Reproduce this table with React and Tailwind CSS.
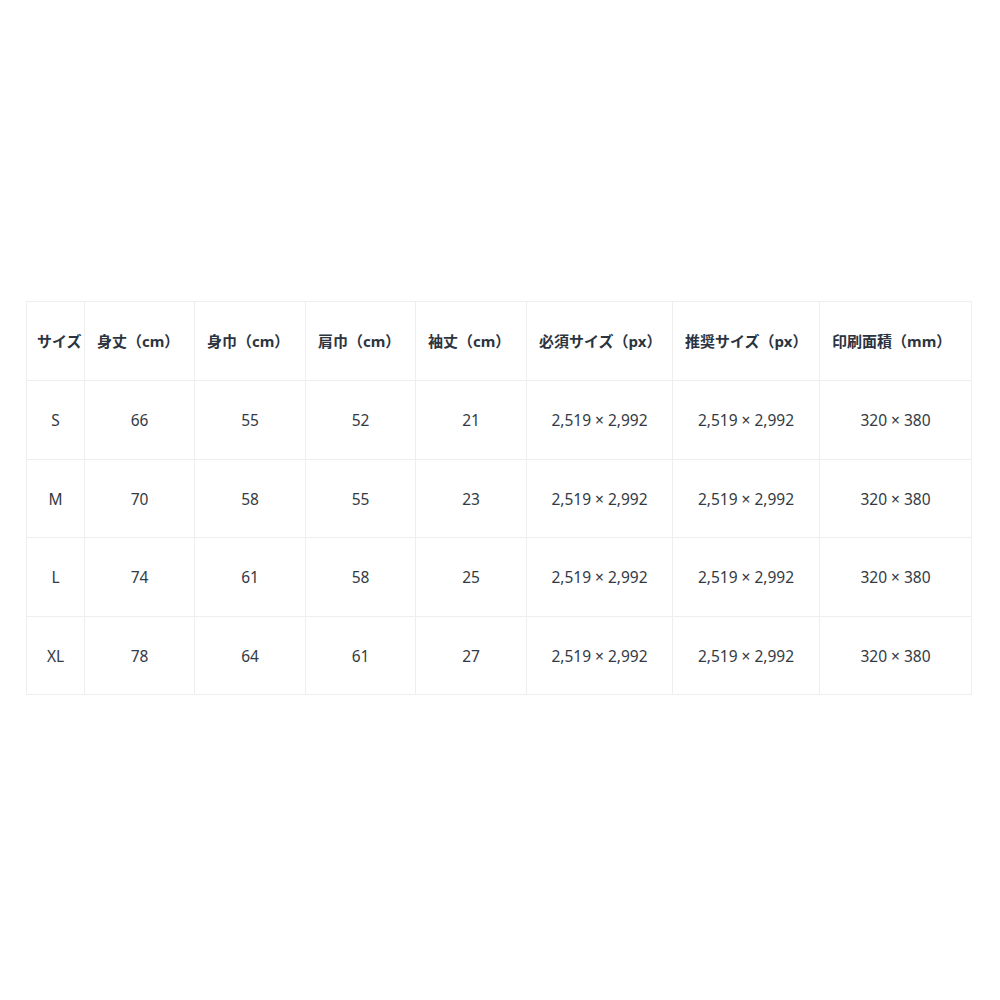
const headers = ['サイズ', '身丈（cm）', '身巾（cm）', '肩巾（cm）', '袖丈（cm）', '必須サイズ（px）', '推奨サイズ（px）', '印刷面積（mm）']
const widths = ['w-[58px]', 'w-[110px]', 'w-[111px]', 'w-[110px]', 'w-[111px]', 'w-[146px]', 'w-[147px]', 'w-[152px]']

const rows = [
  ['S', '66', '55', '52', '21', '2,519 × 2,992', '2,519 × 2,992', '320 × 380'],
  ['M', '70', '58', '55', '23', '2,519 × 2,992', '2,519 × 2,992', '320 × 380'],
  ['L', '74', '61', '58', '25', '2,519 × 2,992', '2,519 × 2,992', '320 × 380'],
  ['XL', '78', '64', '61', '27', '2,519 × 2,992', '2,519 × 2,992', '320 × 380'],
]

export default function App() {
  return (
    <div className="w-[1000px] h-[1000px] bg-white pt-[301px] pl-[26px]" style={{ fontFamily: '"Noto Sans", "Noto Sans CJK JP", sans-serif' }}>
      <table className="border-collapse table-fixed w-[945px] text-[15px] text-[#333a44]">
        <thead>
          <tr className="h-[79px]">
            {headers.map((h, i) => (
              <th key={h} className={`${widths[i]} border border-[#eeeeee] ${i === 0 ? 'pl-[10px] pr-0' : 'px-3'} text-left font-bold text-[#2c3440] whitespace-nowrap`}>
                {h}
              </th>
            ))}
          </tr>
        </thead>
        <tbody>
          {rows.map(r => (
            <tr key={r[0]} className="h-[78.5px]">
              {r.map((c, i) => (
                <td key={i} className="border border-[#eeeeee] px-2 pt-[2px] text-center text-[15.5px] whitespace-nowrap">
                  {c}
                </td>
              ))}
            </tr>
          ))}
        </tbody>
      </table>
    </div>
  )
}
